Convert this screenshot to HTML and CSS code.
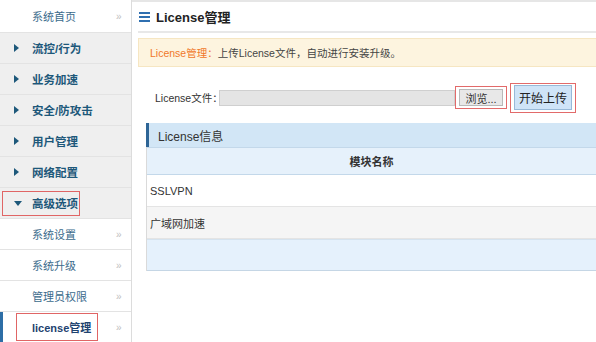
FILE: index.html
```html
<!DOCTYPE html>
<html lang="zh">
<head>
    <meta charset="UTF-8">
    <title>License管理</title>
    <link rel="stylesheet" href="styles.css">
</head>
<body>

<div class="sidebar">
    <div class="nav-item sub first"><span class="sub-text">系统首页</span><span class="arrow">»</span></div>
    <div class="nav-item group"><span class="tri-right"></span><span>流控/行为</span></div>
    <div class="nav-item group"><span class="tri-right"></span><span>业务加速</span></div>
    <div class="nav-item group"><span class="tri-right"></span><span>安全/防攻击</span></div>
    <div class="nav-item group"><span class="tri-right"></span><span>用户管理</span></div>
    <div class="nav-item group"><span class="tri-right"></span><span>网络配置</span></div>
    <div class="nav-item group open">
        <span class="mark-box"><span class="tri-down"></span><span>高级选项</span></span>
    </div>
    <div class="nav-item sub"><span class="sub-text">系统设置</span><span class="arrow">»</span></div>
    <div class="nav-item sub"><span class="sub-text">系统升级</span><span class="arrow">»</span></div>
    <div class="nav-item sub"><span class="sub-text">管理员权限</span><span class="arrow">»</span></div>
    <div class="nav-item sub active"><span class="mark-box lic">license管理</span><span class="arrow">»</span></div>
</div>

<div class="main">
    <div class="page-title">
        <svg class="menu-icon" width="11" height="10" viewBox="0 0 11 10">
            <rect x="0" y="0" width="11" height="2" fill="#2f6fb0"/>
            <rect x="0" y="4" width="11" height="2" fill="#2f6fb0"/>
            <rect x="0" y="8" width="11" height="2" fill="#2f6fb0"/>
        </svg>
        <span>License管理</span>
    </div>

    <div class="alert">
        <span class="alert-key">License管理：</span>上传License文件，自动进行安装升级。
    </div>

    <div class="upload-row">
        <span class="upload-label">License文件：</span>
        <span class="file-box"></span>
        <span class="red-mark browse-mark"><button class="btn-browse">浏览...</button></span>
        <span class="red-mark upload-mark"><button class="btn-upload">开始上传</button></span>
    </div>

    <div class="panel">
        <div class="panel-head">License信息</div>
        <div class="table-head">模块名称</div>
        <div class="table-row">SSLVPN</div>
        <div class="table-row alt">广域网加速</div>
        <div class="table-row empty"></div>
    </div>
</div>

</body>
</html>
```

FILE: styles.css
```css
body {
    margin: 0;
    padding: 0;
    width: 596px;
    height: 342px;
    overflow: hidden;
    display: flex;
    background: #fff;
    font-family: "Liberation Sans", "Noto Sans CJK SC", sans-serif;
    color: #333;
    white-space: nowrap;
}
.sidebar {
    width: 131px;
    border-right: 1px solid #dcdcdc;
    flex-shrink: 0;
    background: #fff;
}
.nav-item {
    height: 30px;
    border-bottom: 1px solid #e3e3e3;
    display: flex;
    align-items: center;
    position: relative;
}
.nav-item.first {
    height: 32px;
}
.group {
    background: #efefef;
    font-size: 11.5px;
    font-weight: bold;
    color: #1d587a;
    padding-left: 14px;
}
.tri-right {
    width: 0;
    height: 0;
    border-top: 4px solid transparent;
    border-bottom: 4px solid transparent;
    border-left: 5px solid #1d587a;
    margin-right: 13px;
}
.tri-down {
    width: 0;
    height: 0;
    border-left: 4px solid transparent;
    border-right: 4px solid transparent;
    border-top: 5px solid #1d587a;
    margin-right: 10px;
}
.group.open {
    padding-left: 2px;
}
.mark-box {
    display: flex;
    align-items: center;
    border: 1px solid #e06565;
    height: 25px;
    padding: 0 1px 0 11px;
    box-sizing: border-box;
}
.sub {
    background: #fff;
    font-size: 11px;
    color: #3b6b8c;
    padding-left: 32px;
}
.sub .arrow {
    position: absolute;
    left: 116px;
    color: #c0c0c0;
    font-size: 10px;
}
.sub.active {
    padding-left: 16px;
    box-shadow: inset 3px 0 0 #2d6ea6;
}
.mark-box.lic {
    height: 28px;
    width: 82px;
    padding-left: 15px;
    font-weight: bold;
    color: #1e4370;
    font-size: 11px;
}
.main {
    flex: 1;
    padding-left: 6px;
    border-top: 2px solid #e6e6e6;
}
.page-title {
    height: 29px;
    border-bottom: 2px solid #e8e8e8;
    display: flex;
    align-items: center;
    padding-left: 1px;
    font-size: 13px;
    font-weight: bold;
    color: #222;
}
.menu-icon {
    margin-right: 6px;
}
.alert {
    margin-top: 5px;
    height: 27px;
    background: #fdf4df;
    border: 1px solid #f6e6c2;
    border-right: none;
    display: flex;
    align-items: center;
    padding-left: 11px;
    font-size: 10.5px;
    color: #444;
}
.alert-key {
    color: #f0782a;
}
.upload-row {
    margin-top: 15px;
    height: 31px;
    display: flex;
    align-items: center;
    padding-left: 17px;
    font-size: 10.5px;
    color: #333;
}
.upload-label {
    width: 64px;
}
.file-box {
    width: 234px;
    height: 14px;
    background: #e4e4e4;
    border: 1px solid #cfcfcf;
}
.red-mark {
    border: 1px solid #e26a6a;
    display: flex;
    align-items: center;
    justify-content: center;
    box-sizing: border-box;
}
.browse-mark {
    width: 52px;
    height: 23px;
}
.upload-mark {
    width: 66px;
    height: 30px;
    margin-left: 3px;
}
.btn-browse {
    width: 44px;
    height: 17px;
    background: #e8e8e8;
    border: 1px solid #b9b9b9;
    font-family: "Liberation Sans", "Noto Sans CJK SC", sans-serif;
    font-size: 11px;
    color: #333;
    padding: 0;
}
.btn-upload {
    width: 58px;
    height: 25px;
    background: #cfe4f8;
    border: 1px solid #98b9d8;
    font-family: "Liberation Sans", "Noto Sans CJK SC", sans-serif;
    font-size: 12px;
    color: #222;
    padding: 0;
}
.panel {
    margin-top: 10px;
    margin-left: 8px;
    border-left: 1px solid #dadada;
}
.panel-head {
    height: 24px;
    background: #d2e6f6;
    border-left: 3px solid #2e6596;
    margin-left: -1px;
    display: flex;
    align-items: center;
    padding-left: 9px;
    font-size: 12px;
    color: #333;
}
.table-head {
    height: 26px;
    background: #e6f1fb;
    border-top: 1px solid #c3d8ea;
    border-bottom: 1px solid #c3d8ea;
    display: flex;
    align-items: center;
    justify-content: center;
    font-size: 11px;
    font-weight: bold;
    color: #333;
}
.table-row {
    height: 31px;
    border-bottom: 1px solid #e4e4e4;
    display: flex;
    align-items: center;
    padding-left: 3px;
    font-size: 11px;
    color: #333;
}
.table-row.alt {
    background: #f5f5f5;
}
.table-row.empty {
    background: #e5f1fc;
    border-top: 1px solid #d5e3ef;
    border-bottom: 1px solid #c5d6e5;
    height: 30px;
}
```
